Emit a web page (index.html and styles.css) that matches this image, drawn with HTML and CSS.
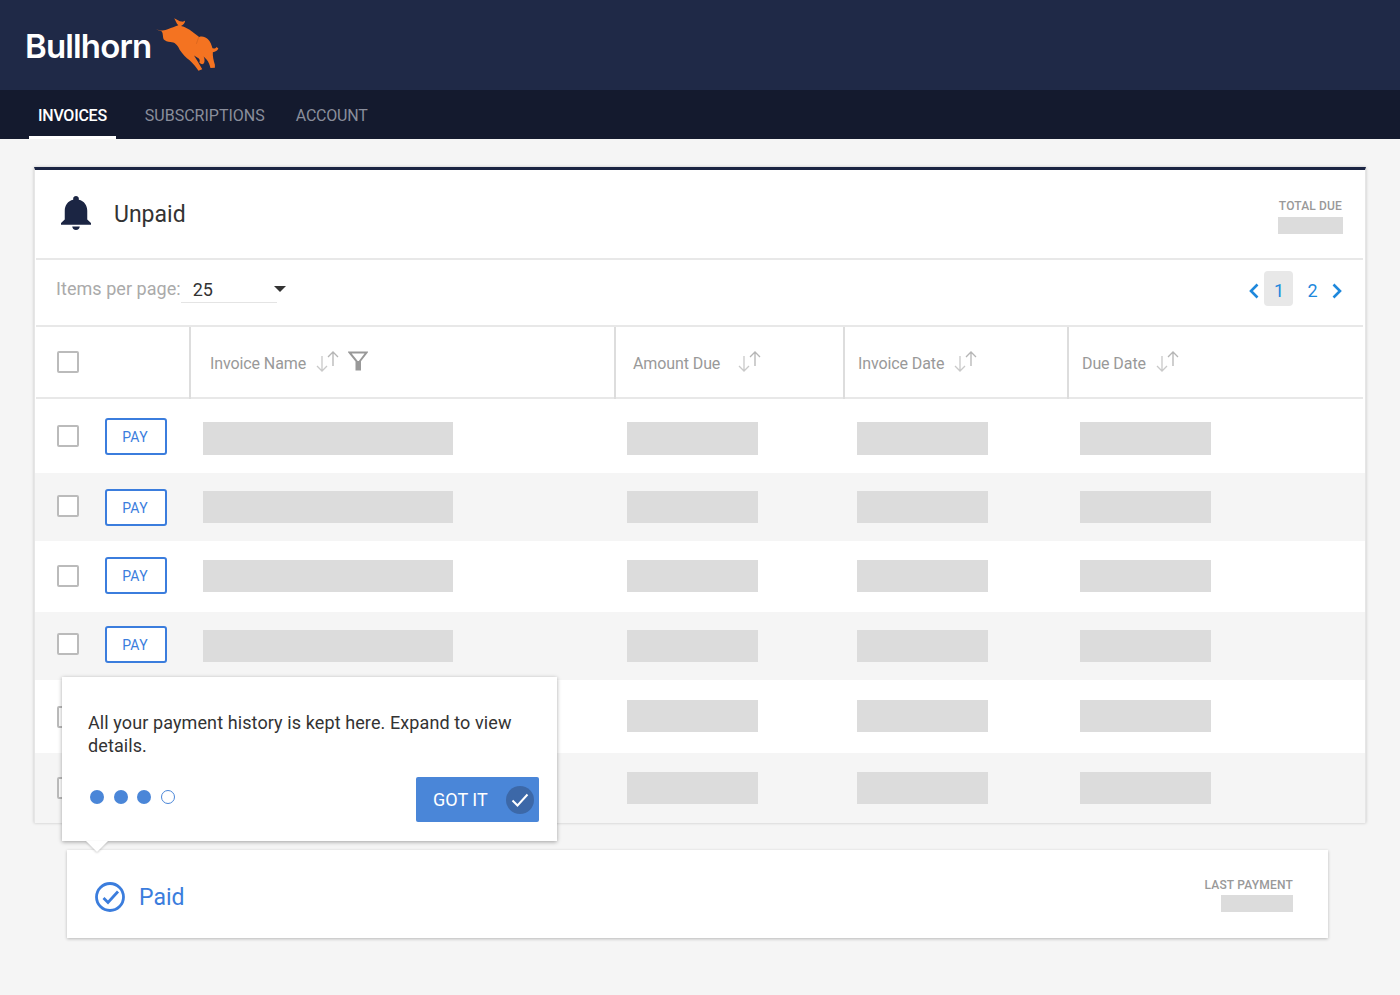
FILE: index.html
```html
<!DOCTYPE html>
<html lang="en">

<head>
    <meta charset="UTF-8">
    <meta name="viewport" content="width=device-width, initial-scale=1.0">
    <title>Invoices</title>
    <link rel="stylesheet" href="styles.css">
</head>

<body>
    <svg class="sprites" width="0" height="0">
        <symbol id="sort" viewBox="0 0 23 21">
            <path d="M6 5v15M1 15l5 5 5-5" fill="none" stroke="#c9c9c9" stroke-width="1.3"/>
            <path d="M17 15V1M12 6l5-5 5 5" fill="none" stroke="#b5b5b5" stroke-width="1.3"/>
        </symbol>
    </svg>

    <header class="brand">
        <span class="logo-text">Bullhorn</span>
        <svg class="bull" viewBox="480 55 190 160" width="65" height="55">
            <path fill="#f47321" d="M483 88C495 95 510 96 522 90C532 86 540 84 551 79C545 72 543 65 539 58C547 62 553 67 561 68C565 69 568 67 571 65C571 72 566 78 559 81C570 83 582 90 592 98C600 104 606 109 612 113C620 110 630 112 637 119C645 127 648 136 651 146C656 147 660 146 663 142L668 147C666 153 659 157 652 158C651 168 654 182 658 194L658 203L645 204C643 195 640 186 633 178L625 170C628 176 629 183 626 190C623 194 617 193 612 187C615 184 614 180 611 176L597 167C603 176 612 192 621 207L610 212C603 200 594 190 584 181C574 174 563 162 555 150C548 136 540 128 528 128C520 127 512 125 508 120C505 112 507 103 503 97C497 94 489 92 483 88Z"/>
            <path d="M611 113C608 121 606 127 604 133" fill="none" stroke="#c75c19" stroke-width="1.500"/>
        </svg>
    </header>

    <nav class="tabs">
        <a class="tab active">INVOICES</a>
        <a class="tab">SUBSCRIPTIONS</a>
        <a class="tab tab-last">ACCOUNT</a>
    </nav>

    <main class="page">
        <section class="card">
            <div class="card-head">
                <svg class="bell" viewBox="4 2.5 16 19.5" width="30" height="34" preserveAspectRatio="none">
                    <path fill="#1b2543" d="M12 22c1.1 0 2-.9 2-2h-4c0 1.1.89 2 2 2zm6-6v-5c0-3.07-1.64-5.64-4.5-6.32V4c0-.83-.67-1.5-1.5-1.5s-1.5.67-1.5 1.5v.68C7.63 5.36 6 7.92 6 11v5l-2 2v1h16v-1l-2-2z"/>
                </svg>
                <h1 class="card-title">Unpaid</h1>
                <div class="summary">
                    <span class="summary-label">TOTAL DUE</span>
                    <span class="ph summary-ph"></span>
                </div>
            </div>

            <div class="toolbar">
                <span class="per-page">Items per page:</span>
                <div class="select">25<span class="caret"></span></div>
                <div class="pager">
                    <svg class="chev" viewBox="0 0 10 16" width="10" height="16"><path d="M8.5 1.5L2 8l6.500 6.500" fill="none" stroke="#1e88dc" stroke-width="2.600"/></svg>
                    <span class="page-num current">1</span>
                    <span class="page-num">2</span>
                    <svg class="chev" viewBox="0 0 10 16" width="10" height="16"><path d="M1.500 1.500L8 8l-6.500 6.500" fill="none" stroke="#1e88dc" stroke-width="2.600"/></svg>
                </div>
            </div>

            <div class="row head-row">
                <div class="cell check-cell"><span class="checkbox"></span></div>
                <div class="cell th th-name">Invoice Name
                    <svg class="sort" width="23" height="21"><use href="#sort"/></svg>
                    <svg class="filter" viewBox="0 0 20 20" width="20" height="20">
                        <path d="M1.500 1.500h17L12 10v8.500H8.500V10z" fill="none" stroke="#999" stroke-width="2"/>
                        <path d="M8.500 10H12v8.500H8.500z" fill="#999"/>
                    </svg>
                </div>
                <div class="cell th th-amount">Amount Due
                    <svg class="sort wide" width="23" height="21"><use href="#sort"/></svg>
                </div>
                <div class="cell th th-date">Invoice Date
                    <svg class="sort" width="23" height="21"><use href="#sort"/></svg>
                </div>
                <div class="cell th th-due">Due Date
                    <svg class="sort" width="23" height="21"><use href="#sort"/></svg>
                </div>
            </div>

            <div class="row r1">
                <div class="cell check-cell"><span class="checkbox"></span><button class="pay">PAY</button></div>
                <div class="cell td-a"><span class="ph name"></span></div>
                <div class="cell td-b"><span class="ph short"></span></div>
                <div class="cell td-a"><span class="ph short"></span></div>
                <div class="cell td-b"><span class="ph short"></span></div>
            </div>
            <div class="row r2 alt">
                <div class="cell check-cell"><span class="checkbox"></span><button class="pay">PAY</button></div>
                <div class="cell td-a"><span class="ph name"></span></div>
                <div class="cell td-b"><span class="ph short"></span></div>
                <div class="cell td-a"><span class="ph short"></span></div>
                <div class="cell td-b"><span class="ph short"></span></div>
            </div>
            <div class="row r3">
                <div class="cell check-cell"><span class="checkbox"></span><button class="pay">PAY</button></div>
                <div class="cell td-a"><span class="ph name"></span></div>
                <div class="cell td-b"><span class="ph short"></span></div>
                <div class="cell td-a"><span class="ph short"></span></div>
                <div class="cell td-b"><span class="ph short"></span></div>
            </div>
            <div class="row r4 alt">
                <div class="cell check-cell"><span class="checkbox"></span><button class="pay">PAY</button></div>
                <div class="cell td-a"><span class="ph name"></span></div>
                <div class="cell td-b"><span class="ph short"></span></div>
                <div class="cell td-a"><span class="ph short"></span></div>
                <div class="cell td-b"><span class="ph short"></span></div>
            </div>
            <div class="row r5">
                <div class="cell check-cell"><span class="checkbox"></span></div>
                <div class="cell td-a"></div>
                <div class="cell td-b"><span class="ph short"></span></div>
                <div class="cell td-a"><span class="ph short"></span></div>
                <div class="cell td-b"><span class="ph short"></span></div>
            </div>
            <div class="row r6 alt">
                <div class="cell check-cell"><span class="checkbox"></span></div>
                <div class="cell td-a"></div>
                <div class="cell td-b"><span class="ph short"></span></div>
                <div class="cell td-a"><span class="ph short"></span></div>
                <div class="cell td-b"><span class="ph short"></span></div>
            </div>
        </section>

        <section class="card-paid">
            <svg class="paid-icon" viewBox="0 0 30 30" width="30" height="30">
                <circle cx="15" cy="15" r="13.500" fill="none" stroke="#3b7ddd" stroke-width="2.800"/>
                <path d="M8.500 16l4.500 4.500L23 9.500" fill="none" stroke="#3b7ddd" stroke-width="2.800"/>
            </svg>
            <h2 class="paid-title">Paid</h2>
            <div class="summary">
                <span class="summary-label">LAST PAYMENT</span>
                <span class="ph last-ph"></span>
            </div>
        </section>

        <!-- onboarding tip over the table -->
        <div class="tip">
            <p class="tip-text">All your payment history is kept here. Expand to view details.</p>
            <div class="tip-foot">
                <div class="dots">
                    <span class="dot"></span>
                    <span class="dot"></span>
                    <span class="dot"></span>
                    <span class="dot empty"></span>
                </div>
                <button class="got-it">GOT IT
                    <span class="got-check">
                        <svg viewBox="0 0 18 14" width="18" height="14"><path d="M1.500 7.500l5 5L16.500 1.500" fill="none" stroke="#fff" stroke-width="2"/></svg>
                    </span>
                </button>
            </div>
        </div>
    </main>
</body>

</html>
```

FILE: styles.css
```css
* {
    box-sizing: border-box;
}

body {
    font-family: Roboto, "Liberation Sans", sans-serif;
    background-color: #f5f5f5;
    margin: 0;
    padding: 0;
    height: 995px;
    overflow: hidden;
}

.sprites {
    display: block;
    height: 0;
}

.brand {
    height: 90px;
    background-color: #1f2947;
    display: flex;
    align-items: flex-start;
    padding-left: 25px;
}

.logo-text {
    font-family: Inter, sans-serif;
    font-weight: 600;
    font-size: 33px;
    letter-spacing: -0.850px;
    color: #fff;
    line-height: 40px;
    margin-top: 26px;
}

.bull {
    margin-left: 3px;
    margin-top: 17px;
    flex: none;
}

.tabs {
    height: 49px;
    background-color: #141a2e;
    display: flex;
    padding-left: 29px;
}

.tab {
    font-size: 16px;
    color: #8a8e9b;
    line-height: 51px;
    padding: 0 9px;
    margin-right: 13px;
    height: 49px;
}

.tab.active {
    color: #fff;
    font-weight: 500;
    letter-spacing: -0.250px;
    border-bottom: 3px solid #fff;
    margin-right: 20px;
}

.tab-last {
    letter-spacing: -0.200px;
}

.page {
    position: relative;
    padding: 28px 34px 0;
}

.card {
    background-color: #fff;
    border-top: 3px solid #1b2543;
    border-left: 1px solid #e6e6e6;
    border-right: 1px solid #e6e6e6;
    box-shadow: 0 0 3px rgba(0, 0, 0, 0.2);
}

.card-head {
    height: 90px;
    margin: 0 2px 0 1px;
    padding: 0 20px 0 25px;
    border-bottom: 2px solid #e8e8e8;
    display: flex;
    align-items: center;
}

.bell {
    margin-bottom: 2px;
}

.card-title {
    font-size: 23px;
    font-weight: 400;
    color: #333;
    margin: 0 0 0 23px;
}

.summary {
    margin-left: auto;
    display: flex;
    flex-direction: column;
    align-items: flex-end;
}

.summary-label {
    font-size: 12px;
    font-weight: 500;
    letter-spacing: 0.150px;
    color: #999;
    line-height: 14px;
}

.ph {
    display: block;
    background-color: #dcdcdc;
}

.summary-ph {
    width: 65px;
    height: 17px;
    margin-top: 4px;
}

.card-head .summary {
    padding-top: 5px;
}

.card-head .summary-label {
    margin-right: 1px;
}

.toolbar {
    height: 67px;
    margin: 0 2px 0 1px;
    padding: 0 21px 0 20px;
    border-bottom: 2px solid #e8e8e8;
    display: flex;
    align-items: center;
}

.per-page {
    font-size: 18px;
    letter-spacing: 0.050px;
    color: #aaa;
    padding-bottom: 8px;
}

.select {
    position: relative;
    width: 96px;
    height: 25px;
    font-size: 18px;
    color: #333;
    padding-left: 12px;
    line-height: 23px;
    border-bottom: 1px solid #e4e4e4;
    margin-bottom: 5px;
}

.caret {
    position: absolute;
    right: -9px;
    top: 8px;
    border-left: 6px solid transparent;
    border-right: 6px solid transparent;
    border-top: 6px solid #333;
}

.pager {
    margin-left: auto;
    margin-bottom: 8px;
    display: flex;
    align-items: center;
    color: #1e88dc;
    font-size: 18px;
}

.page-num {
    width: 29px;
    height: 35px;
    line-height: 40px;
    text-align: center;
    border-radius: 4px;
}

.page-num.current {
    background-color: #e8e8e8;
    padding-left: 1px;
    margin: 0 5px 0 5px;
}

.chev {
    margin-top: 4px;
}

.chev:last-child {
    margin-left: 5px;
}

.row {
    display: grid;
    grid-template-columns: 155px 425px 229px 224px 297px;
}

.head-row {
    height: 72px;
    margin: 0 2px 0 1px;
    border-bottom: 2px solid #e8e8e8;
    grid-template-columns: 153px 425px 229px 224px 297px;
}

.cell {
    display: flex;
    align-items: center;
}

.check-cell {
    padding-left: 22px;
}

.head-row .check-cell {
    padding-left: 21px;
}

.checkbox {
    width: 22px;
    height: 22px;
    border: 2px solid #bbb;
    border-radius: 2px;
    background-color: #fff;
    flex: none;
}

.pay {
    width: 62px;
    height: 37px;
    margin-left: 26px;
    background-color: #fff;
    border: 2px solid #3b7ddd;
    border-radius: 3px;
    color: #3b7ddd;
    font-family: inherit;
    font-size: 14px;
    letter-spacing: 0.300px;
    padding: 1px 2px 0 0;
}

.th {
    border-left: 2px solid #ddd;
    font-size: 16px;
    letter-spacing: -0.100px;
    color: #999;
    padding-top: 1px;
    margin-bottom: -2px;
}

.th-name {
    padding-left: 19px;
}

.th-amount {
    padding-left: 17px;
}

.th-date,
.th-due {
    padding-left: 13px;
}

.sort {
    margin-left: 10px;
    margin-top: -5px;
}

.sort.wide {
    margin-left: 18px;
}

.filter {
    margin-left: 9px;
    margin-top: -5px;
}

.td-a {
    padding-left: 13px;
}

.td-b {
    padding-left: 12px;
}

.name {
    width: 250px;
    height: 32px;
}

.short {
    width: 131px;
    height: 32px;
}

.r1 {
    height: 74px;
}

.r1 .ph {
    height: 33px;
    margin-top: 4px;
}

.r2 {
    height: 68px;
}

.r2 .checkbox,
.r4 .checkbox {
    margin-top: -2px;
}

.r3 {
    height: 71px;
}

.r3 .check-cell {
    margin-top: -2px;
}

.r3 .ph,
.r5 .ph {
    margin-bottom: 1px;
}

.r4 {
    height: 68px;
}

.r4 .check-cell {
    margin-top: -3px;
}

.r5 {
    height: 73px;
}

.r6 {
    height: 70px;
}

.alt {
    background-color: #f5f5f5;
}

.card-paid {
    height: 88px;
    margin: 27px 38px 0 33px;
    padding: 6px 35px 0 28px;
    background-color: #fff;
    box-shadow: 0 1px 3px rgba(0, 0, 0, 0.25);
    display: flex;
    align-items: center;
}

.card-paid .summary {
    margin-top: -4px;
}

.card-paid .summary-label {
    letter-spacing: 0.200px;
}

.paid-title {
    font-size: 23px;
    font-weight: 400;
    color: #3b7ddd;
    margin: 0 0 0 14px;
}

.last-ph {
    width: 72px;
    height: 17px;
    margin-top: 3px;
}

.tip {
    position: absolute;
    left: 62px;
    top: 538px;
    width: 495px;
    height: 164px;
    background-color: #fff;
    box-shadow: 0 1px 4px rgba(0, 0, 0, 0.35);
    padding: 34px 18px 0 26px;
    z-index: 2;
}

.tip::after {
    content: "";
    position: absolute;
    left: 24px;
    bottom: -11px;
    border-left: 11px solid transparent;
    border-right: 11px solid transparent;
    border-top: 11px solid #fff;
    filter: drop-shadow(0 1px 1px rgba(0, 0, 0, 0.2));
}

.tip-text {
    margin: 0;
    font-size: 18px;
    letter-spacing: 0.100px;
    line-height: 23px;
    color: #333;
}

.tip-foot {
    display: flex;
    justify-content: space-between;
    margin-top: 20px;
}

.dots {
    display: flex;
    gap: 9.500px;
    padding: 13px 0 0 2px;
}

.dot {
    width: 14px;
    height: 14px;
    border-radius: 50%;
    background-color: #4a86d8;
}

.dot.empty {
    background-color: #fff;
    border: 1px solid #4a86d8;
}

.got-it {
    width: 123px;
    height: 45px;
    background-color: #4a86d8;
    border: none;
    border-radius: 2px;
    color: #fff;
    font-family: inherit;
    font-size: 18px;
    display: flex;
    align-items: center;
    padding: 0 5px 0 17px;
    justify-content: space-between;
}

.got-check {
    width: 28px;
    height: 28px;
    border-radius: 50%;
    background-color: #3c68a8;
    display: flex;
    align-items: center;
    justify-content: center;
}
```
